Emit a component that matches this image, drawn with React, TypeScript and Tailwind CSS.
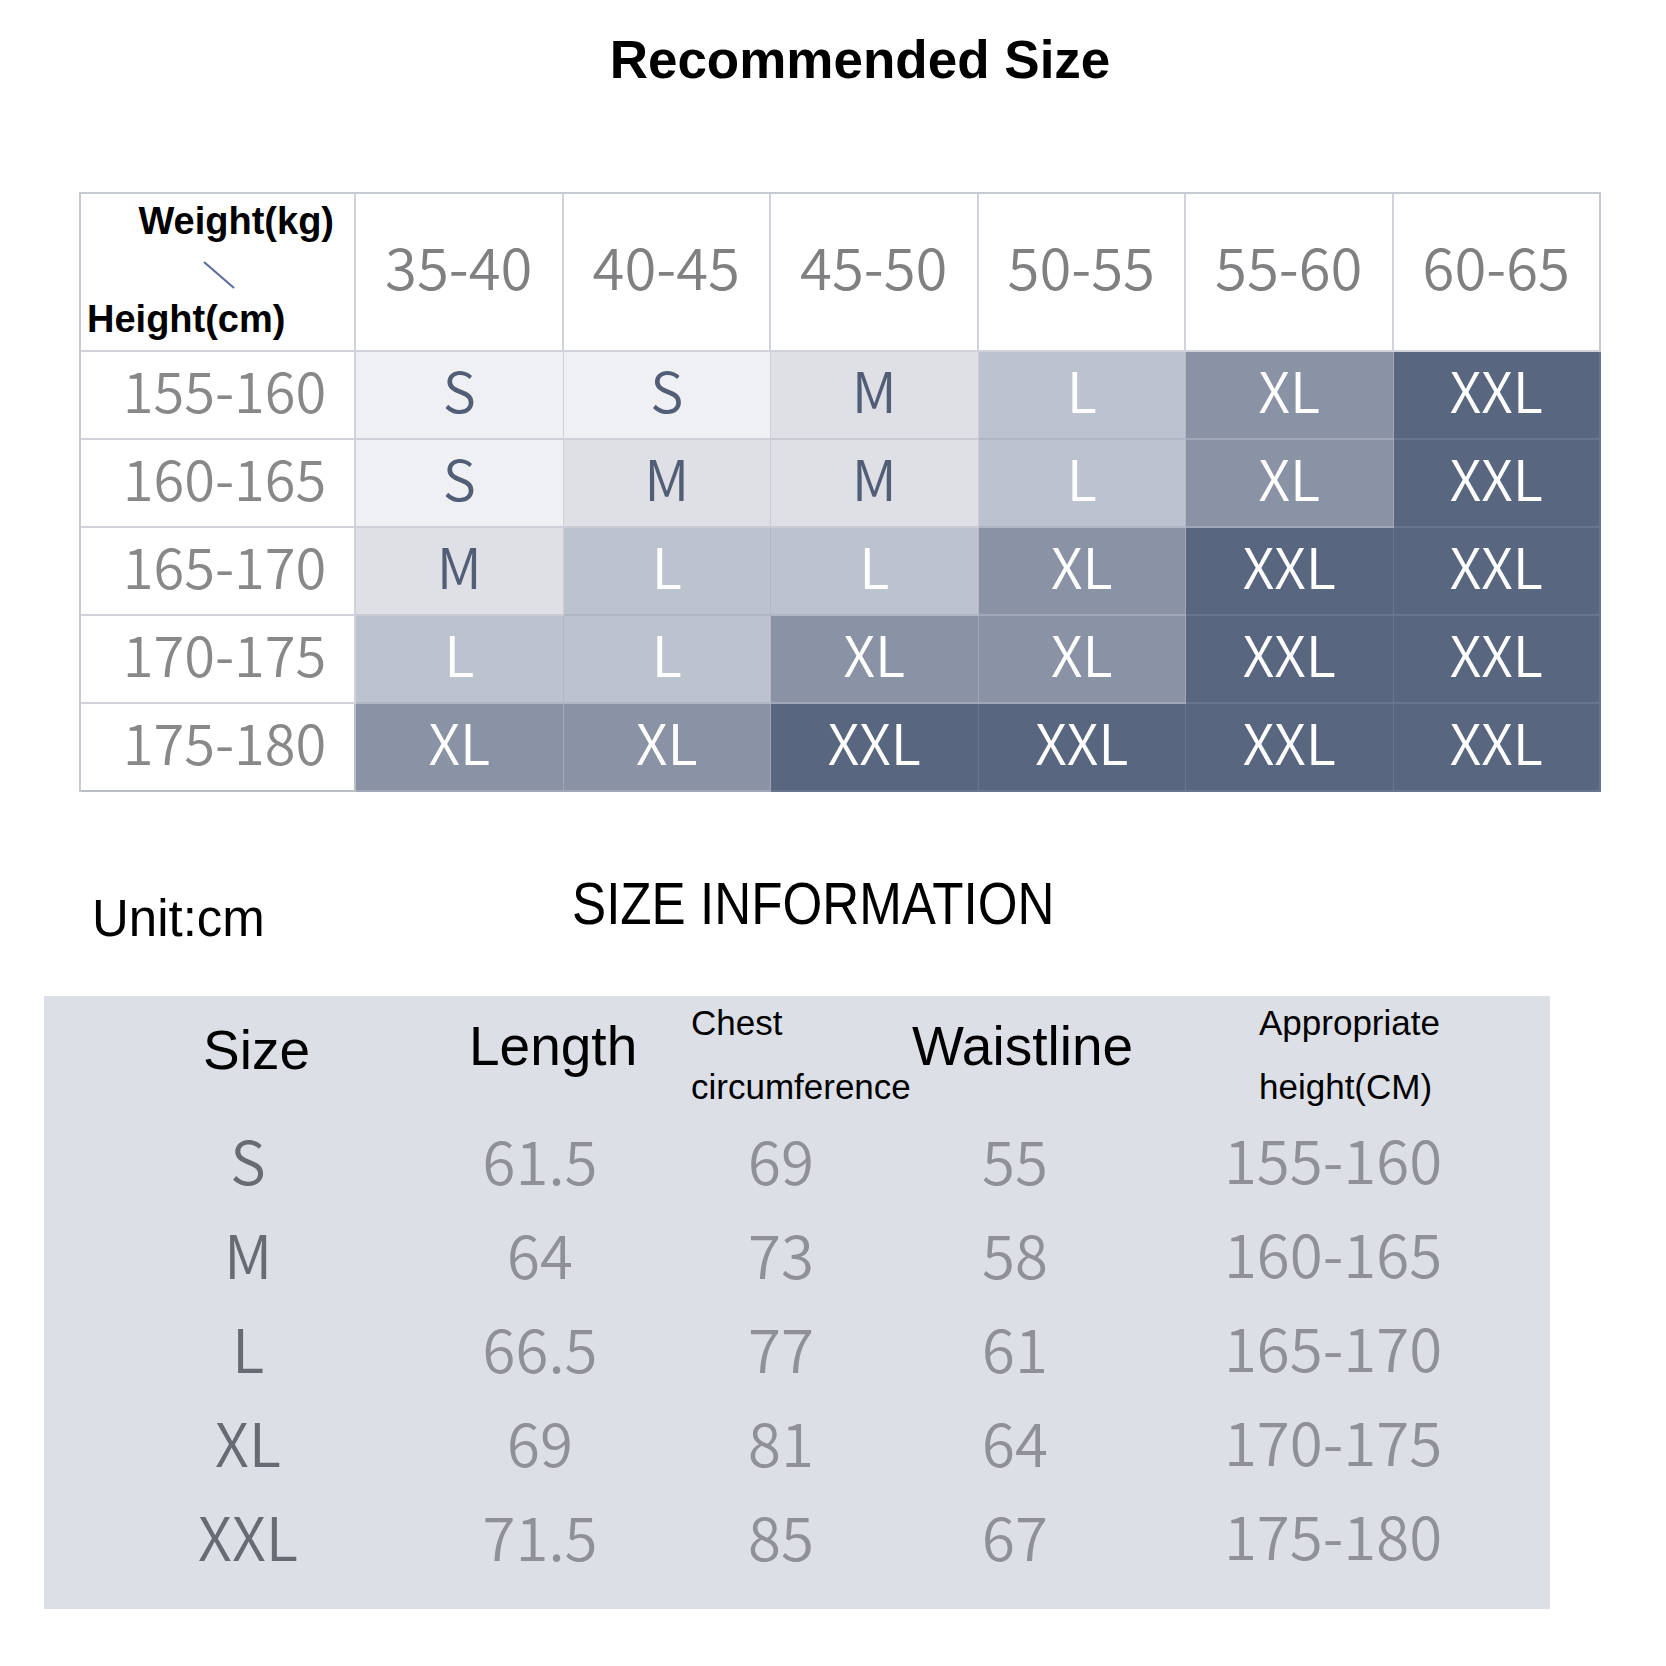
import React from "react";

type Level = "S" | "M" | "L" | "XL" | "XXL";

const weights = ["35-40", "40-45", "45-50", "50-55", "55-60", "60-65"];

const chart: { height: string; sizes: Level[] }[] = [
  { height: "155-160", sizes: ["S", "S", "M", "L", "XL", "XXL"] },
  { height: "160-165", sizes: ["S", "M", "M", "L", "XL", "XXL"] },
  { height: "165-170", sizes: ["M", "L", "L", "XL", "XXL", "XXL"] },
  { height: "170-175", sizes: ["L", "L", "XL", "XL", "XXL", "XXL"] },
  { height: "175-180", sizes: ["XL", "XL", "XXL", "XXL", "XXL", "XXL"] },
];

// cell tint per size
const tone: Record<Level, string> = {
  S: "bg-[#eff0f3] text-[#525d76] border-[#cdd0d8]",
  M: "bg-[#dee0e5] text-[#525d76] border-[#c9ccd4]",
  L: "bg-[#bcc3ce] text-white border-[#b0b7c3]",
  XL: "bg-[#8a92a6] text-white border-white/20",
  XXL: "bg-[#59667f] text-white border-white/10",
};

const info = [
  { size: "S", length: "61.5", chest: "69", waist: "55", height: "155-160" },
  { size: "M", length: "64", chest: "73", waist: "58", height: "160-165" },
  { size: "L", length: "66.5", chest: "77", waist: "61", height: "165-170" },
  { size: "XL", length: "69", chest: "81", waist: "64", height: "170-175" },
  { size: "XXL", length: "71.5", chest: "85", waist: "67", height: "175-180" },
];

const arial = "font-['Liberation_Sans',Arial,sans-serif]";
const cjk = "font-['Noto_Sans_CJK_SC','Noto_Sans',sans-serif] font-[350]";

const Num = ({ children, className = "" }: { children: React.ReactNode; className?: string }) => (
  <span className={`${cjk} text-[60px] leading-none ${className}`}>{children}</span>
);

export default function App() {
  return (
    <div className="w-[1666px] h-[1666px] bg-white overflow-hidden">
      {/* title */}
      <div className={`flex justify-center pl-[54px] pt-[33px] ${arial} text-[53px] font-bold leading-none text-black`}>
        Recommended Size
      </div>

      {/* recommended size chart */}
      <div className="ml-[79px] mt-[106px] w-[1522px] border-t-2 border-l-2 border-[#c6cad3] grid grid-cols-[275px_repeat(6,1fr)] grid-rows-[158px_repeat(5,88px)]">
        <div className={`flex flex-col border-r-2 border-b-2 border-[#cfd2da] pt-[8px] ${arial} font-bold text-[38px] leading-none text-black`}>
          <div className="self-end pr-[20px]">Weight(kg)</div>
          <svg className="ml-[121px] mt-[20px] block" width="34" height="30" viewBox="0 0 34 30">
            <line x1="2" y1="2" x2="32" y2="28" stroke="#5d6e9c" strokeWidth="2.2" />
          </svg>
          <div className="self-start pl-[6px] mt-[10px]">Height(cm)</div>
        </div>
        {weights.map((w, i) => (
          <div
            key={w}
            className={`flex items-center justify-center pb-[14px] border-b-2 border-[#cfd2da] ${i < 5 ? "border-r-2" : "border-r-2 border-r-[#c6cad3]"} ${cjk} text-[58px] leading-none text-[#808083]`}
          >
            {w}
          </div>
        ))}
        {chart.map((row, r) => (
          <React.Fragment key={row.height}>
            <div className={`flex items-center justify-center pl-[14px] pb-[13px] border-r-2 border-b-2 ${r === 4 ? "border-[#b9bdc6]" : "border-[#cfd2da]"} ${cjk} text-[56px] leading-none text-[#88888b]`}>
              {row.height}
            </div>
            {row.sizes.map((s, c) => (
              <div
                key={c}
                className={`flex items-center justify-center pb-[13px] ${c < 5 ? "border-r" : "border-r-2"} border-b-2 ${tone[s]} ${cjk} text-[56px] leading-none`}
              >
                {s}
              </div>
            ))}
          </React.Fragment>
        ))}
      </div>

      {/* size information heading */}
      <div className="mt-[82px] flex items-start">
        <div className={`ml-[92px] w-[480px] mt-[19px] ${arial} text-[51px] leading-none text-black`}>Unit:cm</div>
        <div className={`inline-block origin-left scale-x-[0.853] whitespace-nowrap ${arial} text-[60px] leading-none text-black`}>
          SIZE INFORMATION
        </div>
      </div>

      {/* size information table */}
      <div className="ml-[44px] mt-[52px] w-[1506px] h-[613px] bg-[#dcdfe6] flex flex-col">
        <div className={`h-[120px] flex items-start ${arial} text-black`}>
          <div className="w-[425px] mt-[27px] text-center text-[55px] leading-none">Size</div>
          <div className="w-[222px] mt-[23px] text-[55px] leading-none">Length</div>
          <div className="w-[221px] text-[35px] leading-none">
            <div className="mt-[9px]">Chest</div>
            <div className="mt-[29px]">circumference</div>
          </div>
          <div className="w-[347px] mt-[23px] text-[55px] leading-none">Waistline</div>
          <div className="text-[35px] leading-none">
            <div className="mt-[9px]">Appropriate</div>
            <div className="mt-[29px]">height(CM)</div>
          </div>
        </div>
        {info.map((row) => (
          <div key={row.size} className="h-[94px] pb-[8px] grid grid-cols-[408px_176px_306px_162px_1fr] items-center justify-items-center">
            <Num className="text-[#686b73]">{row.size}</Num>
            <Num className="text-[#8f9197]">{row.length}</Num>
            <Num className="text-[#8f9197]">{row.chest}</Num>
            <Num className="text-[#8f9197]">{row.waist}</Num>
            <div className="pl-[20px]">
              <Num className="text-[#8f9197]">{row.height}</Num>
            </div>
          </div>
        ))}
      </div>
    </div>
  );
}
